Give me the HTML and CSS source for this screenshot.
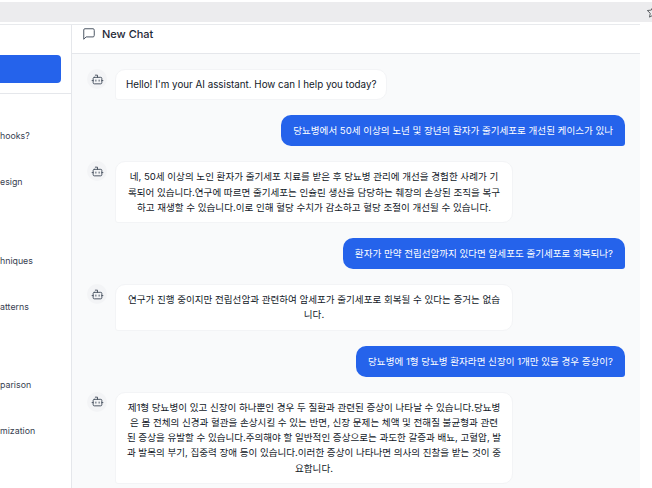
FILE: index.html
```html
<!DOCTYPE html>
<html lang="ko">
<head>
    <meta charset="UTF-8">
    <meta name="viewport" content="width=device-width, initial-scale=1.0">
    <title>New Chat</title>
    <link rel="stylesheet" href="styles.css">
</head>
<body>
    <div class="browser-bar">
        <svg class="star-icon" width="14" height="14" viewBox="0 0 24 24" fill="none" stroke="#55585c" stroke-width="1.6" stroke-linejoin="round">
            <path d="M12 2.5l2.9 6.2 6.8.8-5 4.6 1.3 6.7-6-3.3-6 3.3 1.3-6.7-5-4.6 6.8-.8z"/>
        </svg>
    </div>
    <div class="app">
        <aside class="sidebar">
            <div class="sidebar-top">
                <div class="new-btn"></div>
            </div>
            <ul class="chat-list">
                <li>hooks?</li>
                <li>esign</li>
                <li class="gap-1">hniques</li>
                <li>atterns</li>
                <li class="gap-2">parison</li>
                <li>mization</li>
            </ul>
        </aside>
        <section class="chat">
            <header class="chat-header">
                <svg width="14" height="14" viewBox="0 0 24 24" fill="none" stroke="#4b5563" stroke-width="1.7" stroke-linecap="round" stroke-linejoin="round">
                    <path d="M21 15a2 2 0 0 1-2 2H7l-4 4V5a2 2 0 0 1 2-2h14a2 2 0 0 1 2 2z"/>
                </svg>
                <h1>New Chat</h1>
            </header>
            <main class="messages">
                <div class="msg bot">
                    <span class="avatar"><svg width="13" height="13" viewBox="0 0 24 24" fill="none" stroke="#4b5563" stroke-width="1.8" stroke-linecap="round" stroke-linejoin="round"><path d="M12 8V4H8"/><rect x="4" y="8" width="16" height="12" rx="2"/><path d="M2 14h2"/><path d="M20 14h2"/><path d="M15 13v2"/><path d="M9 13v2"/></svg></span>
                    <p class="bubble latin">Hello! I'm your AI assistant. How can I help you today?</p>
                </div>
                <div class="msg user">
                    <p class="bubble">당뇨병에서 50세 이상의 노년 및 장년의 환자가 줄기세포로 개선된 케이스가 있나</p>
                </div>
                <div class="msg bot">
                    <span class="avatar"><svg width="13" height="13" viewBox="0 0 24 24" fill="none" stroke="#4b5563" stroke-width="1.8" stroke-linecap="round" stroke-linejoin="round"><path d="M12 8V4H8"/><rect x="4" y="8" width="16" height="12" rx="2"/><path d="M2 14h2"/><path d="M20 14h2"/><path d="M15 13v2"/><path d="M9 13v2"/></svg></span>
                    <p class="bubble">네, 50세 이상의 노인 환자가 줄기세포 치료를 받은 후 당뇨병 관리에 개선을 경험한 사례가 기록되어 있습니다.연구에 따르면 줄기세포는 인슐린 생산을 담당하는 췌장의 손상된 조직을 복구하고 재생할 수 있습니다.이로 인해 혈당 수치가 감소하고 혈당 조절이 개선될 수 있습니다.</p>
                </div>
                <div class="msg user">
                    <p class="bubble">환자가 만약 전립선암까지 있다면 암세포도 줄기세포로 회복되나?</p>
                </div>
                <div class="msg bot">
                    <span class="avatar"><svg width="13" height="13" viewBox="0 0 24 24" fill="none" stroke="#4b5563" stroke-width="1.8" stroke-linecap="round" stroke-linejoin="round"><path d="M12 8V4H8"/><rect x="4" y="8" width="16" height="12" rx="2"/><path d="M2 14h2"/><path d="M20 14h2"/><path d="M15 13v2"/><path d="M9 13v2"/></svg></span>
                    <p class="bubble">연구가 진행 중이지만 전립선암과 관련하여 암세포가 줄기세포로 회복될 수 있다는 증거는 없습니다.</p>
                </div>
                <div class="msg user">
                    <p class="bubble">당뇨병에 1형 당뇨병 환자라면 신장이 1개만 있을 경우 증상이?</p>
                </div>
                <div class="msg bot">
                    <span class="avatar"><svg width="13" height="13" viewBox="0 0 24 24" fill="none" stroke="#4b5563" stroke-width="1.8" stroke-linecap="round" stroke-linejoin="round"><path d="M12 8V4H8"/><rect x="4" y="8" width="16" height="12" rx="2"/><path d="M2 14h2"/><path d="M20 14h2"/><path d="M15 13v2"/><path d="M9 13v2"/></svg></span>
                    <p class="bubble">제1형 당뇨병이 있고 신장이 하나뿐인 경우 두 질환과 관련된 증상이 나타날 수 있습니다.당뇨병은 몸 전체의 신경과 혈관을 손상시킬 수 있는 반면, 신장 문제는 체액 및 전해질 불균형과 관련된 증상을 유발할 수 있습니다.주의해야 할 일반적인 증상으로는 과도한 갈증과 배뇨, 고혈압, 발과 발목의 부기, 집중력 장애 등이 있습니다.이러한 증상이 나타나면 의사의 진찰을 받는 것이 중요합니다.</p>
                </div>
            </main>
        </section>
    </div>
</body>
</html>
```

FILE: styles.css
```css
* {
    box-sizing: border-box;
}

body {
    margin: 0;
    height: 100vh;
    overflow: hidden;
    background: white;
    font-family: Inter, "Noto Sans CJK KR", sans-serif;
    color: #111827;
}

.browser-bar {
    height: 20px;
    margin: 2px 0 2px;
    background: #ececee;
    display: flex;
    justify-content: flex-end;
    align-items: center;
    overflow: hidden;
}

.star-icon {
    flex: none;
    margin-right: -8px;
}

.app {
    display: flex;
    height: 464px;
    width: 640px;
    border-top: 1px solid #e8eaed;
}

/* sidebar is cut off by the left edge of the shot */
.sidebar {
    width: 72px;
    flex: none;
    background: white;
    border-right: 1px solid #e5e7eb;
}

.sidebar-top {
    height: 69px;
    padding: 30px 10px 0 0;
    border-bottom: 1px solid #e5e7eb;
}

.new-btn {
    height: 28px;
    background: #2563eb;
    border-radius: 0 4px 4px 0;
}

.chat-list {
    list-style: none;
    margin: 0;
    padding: 35px 0 0;
    font-size: 8.8px;
    line-height: 14px;
    color: #374151;
}

.chat-list li {
    height: 46px;
    overflow: hidden;
    white-space: nowrap;
}

.chat-list li.gap-1 {
    margin-top: 33px;
}

.chat-list li.gap-2 {
    margin-top: 32px;
}

.chat {
    flex: 1;
    display: flex;
    flex-direction: column;
    min-width: 0;
}

.chat-header {
    height: 29px;
    flex: none;
    display: flex;
    align-items: center;
    gap: 6px;
    padding: 0 0 10px 10px;
    border-bottom: 1px solid #e5e7eb;
}

.chat-header h1 {
    margin: 0;
    font-size: 11px;
    font-weight: 500;
    color: #1f2937;
}

.messages {
    flex: 1;
    background: #f9fafb;
    padding: 15px 15px 0 15px;
    display: flex;
    flex-direction: column;
    gap: 15px;
    overflow: hidden;
}

.msg {
    display: flex;
    align-items: flex-start;
    gap: 8px;
}

.msg.user {
    justify-content: flex-end;
}

.avatar {
    width: 20px;
    height: 20px;
    flex: none;
    border-radius: 50%;
    background: #f3f4f6;
    display: flex;
    align-items: center;
    justify-content: center;
}

.bubble {
    margin: 0;
    padding: 8px 12px;
    max-width: 398px;
    font-size: 9.55px;
    line-height: 15.2px;
    text-align: center;
    border-radius: 10px;
}

.bubble.latin {
    font-size: 9.8px;
}

.bot .bubble {
    background: white;
    border: 1px solid #f3f4f6;
    border-bottom-left-radius: 3px;
    padding: 7px 10px;
}

.user .bubble {
    background: #2563eb;
    border-bottom-right-radius: 3px;
    color: white;
}
```
